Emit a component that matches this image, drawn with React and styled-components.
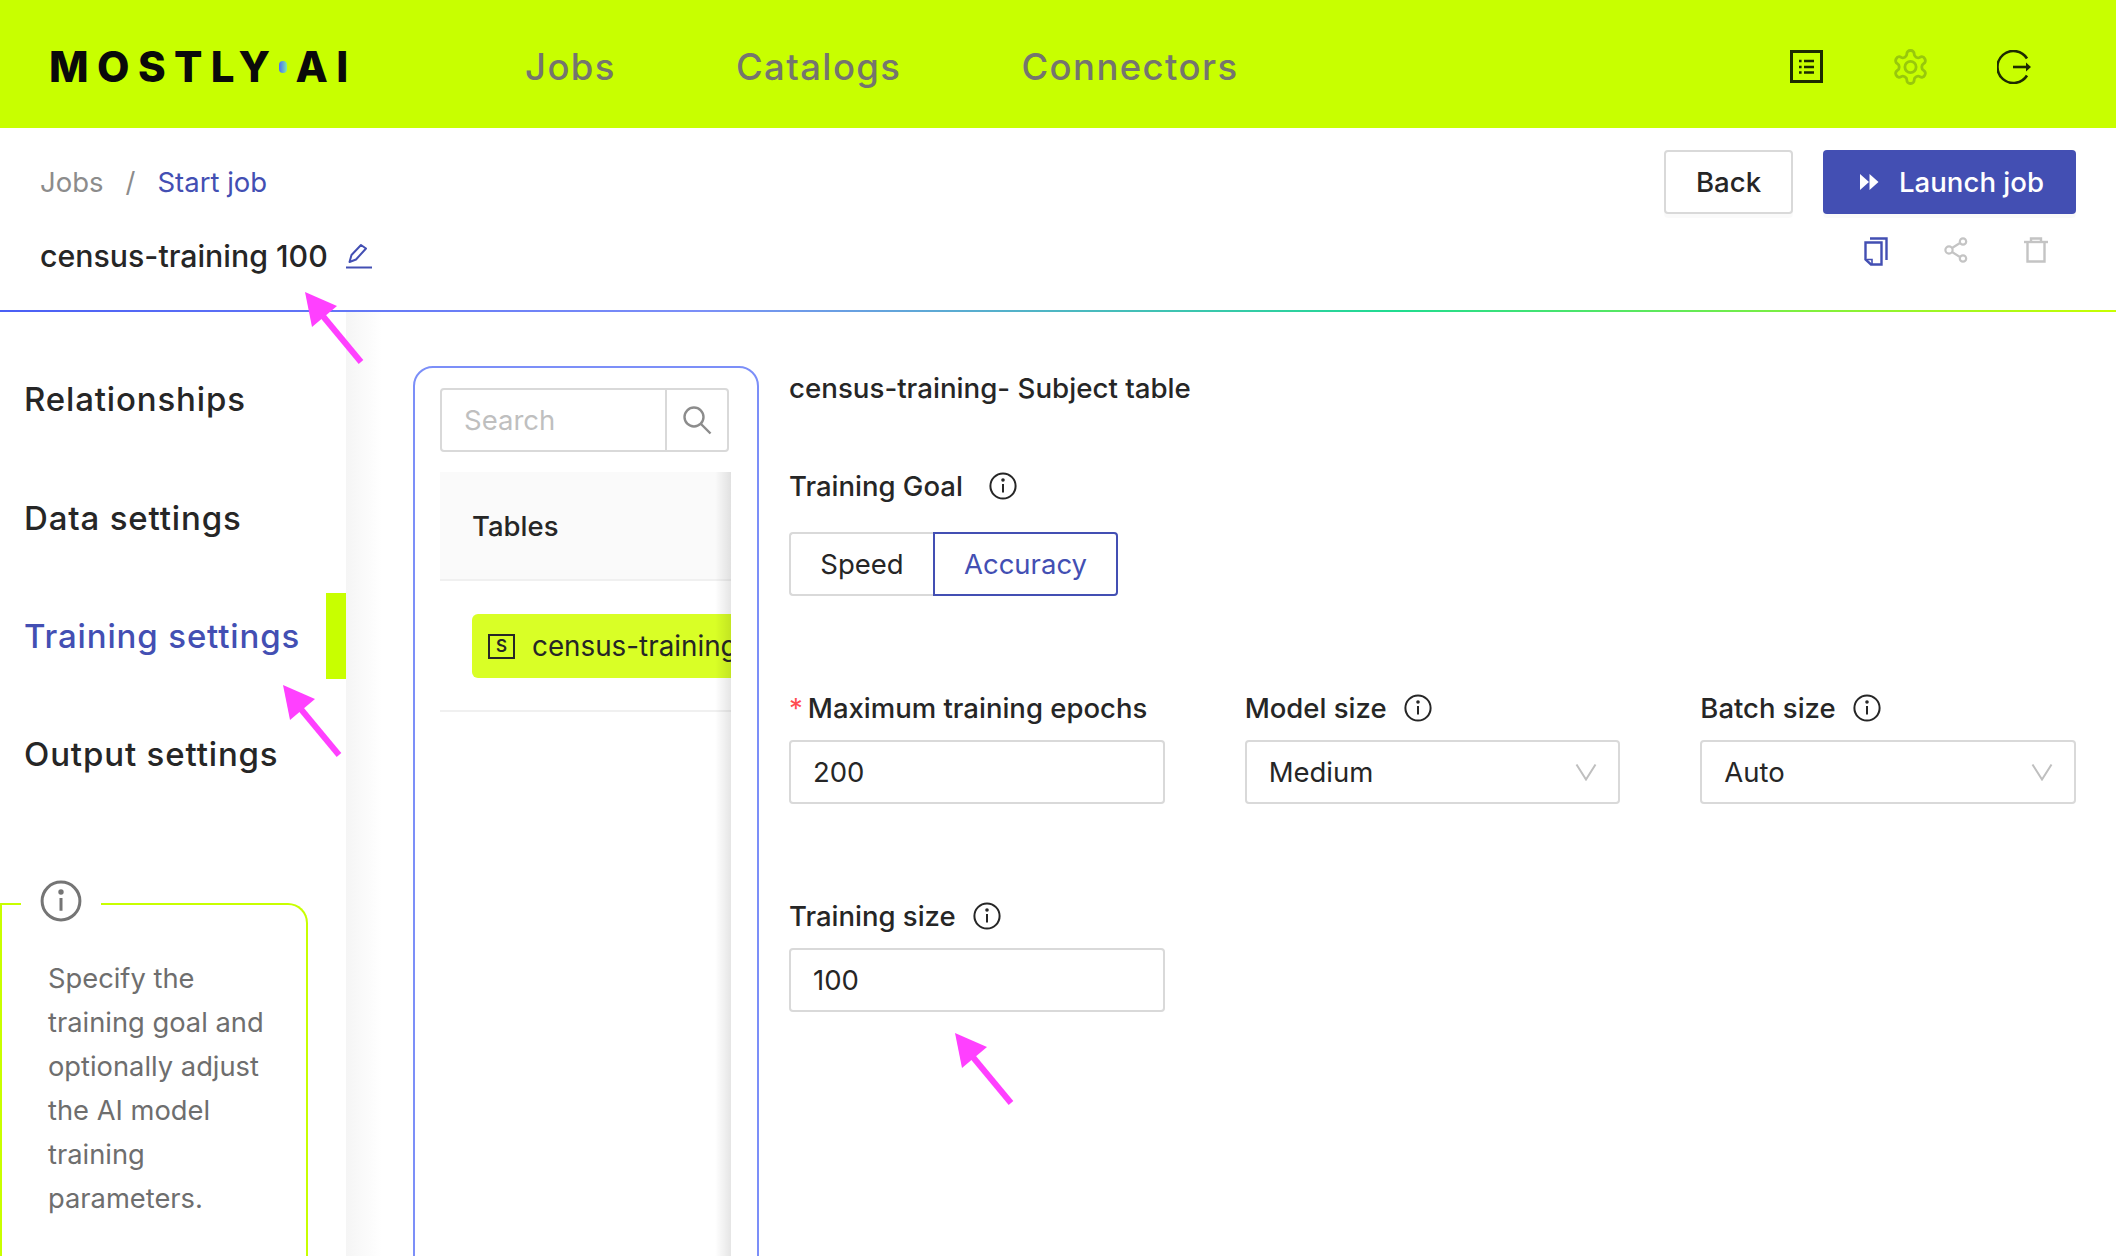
import React from "react";
import styled, { createGlobalStyle } from "styled-components";

const Global = createGlobalStyle`
  * { box-sizing: border-box; }
  html, body { margin: 0; padding: 0; background: #fff; }
  body { font-family: Inter, "Liberation Sans", sans-serif; color: #262626; }
`;

const Page = styled.div`
  position: relative;
  width: 2116px;
  height: 1256px;
  overflow: hidden;
  display: flex;
  flex-direction: column;
  background: #fff;
`;

const Header = styled.header`
  height: 128px;
  flex: none;
  background: #c8ff00;
  display: flex;
  align-items: center;
  padding: 5px 84px 0 49px;
`;

const Logo = styled.div`
  width: 476px;
  flex: none;
  display: flex;
  align-items: center;
  font-size: 42px;
  font-weight: 800;
  letter-spacing: 8.4px;
  color: #0a0a0a;
  line-height: 1;
`;

const LogoDot = styled.span`
  width: 8px;
  height: 12px;
  margin: 0 8px 0 1px;
  border-radius: 6px;
  background: linear-gradient(90deg, #4a6cf7, #7fe8a8);
`;

const Nav = styled.nav`
  display: flex;
  gap: 120px;
  flex: 1;
`;

const NavLink = styled.a`
  font-size: 36.5px;
  font-weight: 500;
  color: #75756e;
  letter-spacing: 1.4px;
`;

const HeaderIcons = styled.div`
  display: flex;
  align-items: center;
  gap: 69.500px;
`;

const SubHeader = styled.section`
  height: 182px;
  flex: none;
  padding: 22px 40px 0;
  display: flex;
  flex-direction: column;
`;

const TopRow = styled.div`
  display: flex;
  justify-content: space-between;
  align-items: center;
  height: 64px;
`;

const Crumbs = styled.div`
  display: flex;
  align-items: center;
  font-size: 27.5px;
`;

const Crumb = styled.span`
  color: ${(p) => (p.$active ? "#434fb3" : "#8c8c8c")};
`;

const CrumbSep = styled.span`
  color: #8c8c8c;
  margin: 0 22px;
`;

const Buttons = styled.div`
  display: flex;
  gap: 30px;
`;

const Button = styled.button`
  height: 64px;
  font-family: inherit;
  font-size: 27.6px;
  font-weight: 500;
  border-radius: 4px;
  display: flex;
  align-items: center;
  justify-content: center;
  gap: 20px;
  cursor: pointer;
  box-shadow: 0 4px 0 rgba(0, 0, 0, 0.02);
  width: ${(p) => (p.$primary ? "253px" : "129px")};
  padding: ${(p) => (p.$primary ? "0 0 0 5px" : "0")};
  background: ${(p) => (p.$primary ? "#434fb3" : "#fff")};
  color: ${(p) => (p.$primary ? "#fff" : "#262626")};
  border: ${(p) => (p.$primary ? "none" : "2px solid #d9d9d9")};
`;

const TitleRow = styled.div`
  display: flex;
  justify-content: space-between;
  align-items: flex-start;
  margin-top: 21px;
`;

const Title = styled.div`
  display: flex;
  align-items: center;
  gap: 18px;
  font-size: 30.300px;
  font-weight: 500;
  line-height: 44px;
  margin-top: -1px;
`;

const TitleActions = styled.div`
  display: flex;
  gap: 56px;
  margin-right: 28px;
  margin-top: 2px;
`;

const Rule = styled.div`
  height: 2px;
  flex: none;
  background: linear-gradient(90deg, #4a5ff5 0%, #7c8ff8 33%, #20dc90 66%, #c8ff00 100%);
`;

const Main = styled.main`
  flex: 1;
  display: flex;
  min-height: 0;
`;

const Sidebar = styled.aside`
  width: 346px;
  flex: none;
  padding-top: 28px;
`;

const SideItem = styled.div`
  height: 118.4px;
  padding-left: 24px;
  display: flex;
  align-items: center;
  justify-content: space-between;
  font-size: 33px;
  font-weight: 500;
  letter-spacing: 0.85px;
  color: ${(p) => (p.$active ? "#434fb3" : "#262626")};
`;

const ActiveBar = styled.span`
  width: 20px;
  height: 86px;
  background: #c8ff00;
`;

const InfoBox = styled.div`
  position: relative;
  width: 308px;
  height: 500px;
  margin-top: 89px;
  border: 2px solid #c8ff00;
  border-bottom: none;
  border-radius: 0 20px 0 0;
  padding: 52px 20px 0 46px;
  font-size: 27.3px;
  line-height: 44px;
  color: #6e6e6e;
`;

const InfoBadge = styled.span`
  position: absolute;
  top: -25px;
  left: 19px;
  width: 80px;
  height: 44px;
  background: #fff;
  display: flex;
  justify-content: center;
`;

const Fade = styled.div`
  width: 36px;
  flex: none;
  background: linear-gradient(90deg, #f5f5f5, #fff);
`;

const Panel = styled.section`
  width: 346px;
  height: 1000px;
  flex: none;
  margin: 54px 0 0 31px;
  border: 2px solid #7c8ff8;
  border-radius: 20px;
  padding: 20px 0 0 25px;
`;

const SearchBox = styled.div`
  width: 289px;
  height: 64px;
  display: flex;
  border: 2px solid #d9d9d9;
  border-radius: 4px;
`;

const SearchInput = styled.input`
  width: 223px;
  border: none;
  outline: none;
  padding: 0 0 0 22px;
  background: transparent;
  font: 27.5px Inter, sans-serif;
  color: #262626;
  &::placeholder { color: #bfbfbf; }
`;

const SearchButton = styled.span`
  flex: 1;
  border-left: 2px solid #d9d9d9;
  display: flex;
  align-items: center;
  justify-content: center;
`;

const TableList = styled.div`
  position: relative;
  width: 291px;
  height: 900px;
  margin-top: 20px;
  overflow: hidden;
  &::after {
    content: "";
    position: absolute;
    top: 0;
    right: 0;
    bottom: 0;
    width: 16px;
    background: linear-gradient(90deg, rgba(0, 0, 0, 0), rgba(0, 0, 0, 0.1));
  }
`;

const TableHead = styled.div`
  height: 109px;
  background: #fafafa;
  border-bottom: 2px solid #f0f0f0;
  padding-left: 32px;
  display: flex;
  align-items: center;
  font-size: 27.5px;
  font-weight: 500;
`;

const TableRow = styled.div`
  height: 131px;
  padding: 33px 0 0 32px;
  border-bottom: 2px solid #f0f0f0;
`;

const TablePill = styled.div`
  width: 300px;
  height: 64px;
  background: #d9ff26;
  border-radius: 6px;
  padding-left: 16px;
  display: flex;
  align-items: center;
  gap: 17px;
  font-size: 27.8px;
  white-space: nowrap;
`;

const SubjectBadge = styled.span`
  width: 27px;
  height: 25px;
  flex: none;
  border: 2px solid #262626;
  display: flex;
  align-items: center;
  justify-content: center;
  font-size: 17px;
  font-weight: 600;
`;

const Content = styled.section`
  flex: 1;
  padding: 59px 40px 0 30px;
`;

const Heading = styled.h2`
  margin: 0;
  font-size: 27.7px;
  line-height: 34px;
  font-weight: 500;
`;

const Label = styled.label`
  display: flex;
  align-items: center;
  height: 34px;
  font-size: 27.5px;
  font-weight: 500;
  gap: ${(p) => p.$gap || 17}px;
`;

const Required = styled.span`
  color: #ff4d4f;
  margin-right: -12px;
  font-weight: 400;
`;

const GoalSection = styled.div`
  margin-top: 64px;
`;

const Segments = styled.div`
  display: flex;
  margin-top: 29px;
`;

const Segment = styled.button`
  height: 64px;
  font-family: inherit;
  font-size: 27.5px;
  background: #fff;
  padding: 0;
  width: ${(p) => (p.$active ? "185px" : "144px")};
  color: ${(p) => (p.$active ? "#434fb3" : "#262626")};
  border: 2px solid ${(p) => (p.$active ? "#434fb3" : "#d9d9d9")};
  border-right-width: ${(p) => (p.$active ? "2px" : "0")};
  border-radius: ${(p) => (p.$active ? "0 4px 4px 0" : "4px 0 0 4px")};
`;

const FieldGrid = styled.div`
  display: grid;
  grid-template-columns: repeat(3, 1fr);
  column-gap: 80px;
  row-gap: 95px;
  margin-top: 95px;
`;

const Field = styled.div`
  display: flex;
  flex-direction: column;
  gap: 15px;
`;

const TextInput = styled.input`
  width: 100%;
  height: 64px;
  border: 2px solid #d9d9d9;
  border-radius: 4px;
  padding: 0 22px;
  font: 27.5px Inter, sans-serif;
  color: #262626;
  outline: none;
`;

const Select = styled.div`
  height: 64px;
  border: 2px solid #d9d9d9;
  border-radius: 4px;
  padding: 0 21px 0 22px;
  font-size: 27.5px;
  display: flex;
  align-items: center;
  justify-content: space-between;
`;

const Arrow = styled.svg`
  position: absolute;
  width: 62px;
  height: 75px;
  left: ${(p) => p.$x}px;
  top: ${(p) => p.$y}px;
`;

const InfoIcon = ({ size = 28, sw = 2, color = "#262626" }) => (
  <svg width={size} height={size} viewBox="0 0 28 28" fill="none" stroke={color} strokeWidth={sw}>
    <circle cx="14" cy="14" r="12.6" />
    <line x1="14" y1="12" x2="14" y2="20.5" />
    <circle cx="14" cy="8" r="0.8" fill={color} />
  </svg>
);

const Chevron = () => (
  <svg width="22" height="18" viewBox="0 0 22 18" fill="none" stroke="#bfbfbf" strokeWidth="2">
    <path d="M1.500 1.500L11 16.500L20.500 1.500" />
  </svg>
);

const MagentaArrow = ({ x, y }) => (
  <Arrow $x={x} $y={y} viewBox="0 0 62 75">
    <path d="M57 71L18 24" stroke="#ff40ff" strokeWidth="6" />
    <path d="M1 1L33 15L8 36Z" fill="#ff40ff" />
  </Arrow>
);

export default function App() {
  return (
    <Page>
      <Global />
      <Header>
        <Logo>
          MOSTLY<LogoDot />AI
        </Logo>
        <Nav>
          <NavLink>Jobs</NavLink>
          <NavLink>Catalogs</NavLink>
          <NavLink>Connectors</NavLink>
        </Nav>
        <HeaderIcons>
          <svg width="33" height="33" viewBox="0 0 33 33" fill="none" stroke="#1d2b00" strokeWidth="3">
            <rect x="1.5" y="1.5" width="30" height="30" />
            <path d="M14 11h10M14 17h10M14 22.5h10" strokeWidth="2.4" />
            <path d="M9 11h2.6M9 17h2.6M9 22.5h2.6" strokeWidth="2.4" />
          </svg>
          <svg width="35" height="36" viewBox="1.400 1.400 21.200 21.200" fill="none" stroke="#98c80c" strokeWidth="1.700" strokeLinejoin="round">
            <path d="M12.22 2h-.44a2 2 0 0 0-2 2v.18a2 2 0 0 1-1 1.73l-.43.25a2 2 0 0 1-2 0l-.15-.08a2 2 0 0 0-2.73.73l-.22.38a2 2 0 0 0 .73 2.73l.15.1a2 2 0 0 1 1 1.72v.51a2 2 0 0 1-1 1.74l-.15.09a2 2 0 0 0-.73 2.73l.22.38a2 2 0 0 0 2.73.73l.15-.08a2 2 0 0 1 2 0l.43.25a2 2 0 0 1 1 1.73V20a2 2 0 0 0 2 2h.44a2 2 0 0 0 2-2v-.18a2 2 0 0 1 1-1.73l.43-.25a2 2 0 0 1 2 0l.15.08a2 2 0 0 0 2.73-.73l.22-.39a2 2 0 0 0-.73-2.73l-.15-.08a2 2 0 0 1-1-1.74v-.5a2 2 0 0 1 1-1.74l.15-.09a2 2 0 0 0 .73-2.73l-.22-.38a2 2 0 0 0-2.73-.73l-.15.08a2 2 0 0 1-2 0l-.43-.25a2 2 0 0 1-1-1.73V4a2 2 0 0 0-2-2z" />
            <circle cx="12" cy="12" r="3.4" />
          </svg>
          <svg width="35" height="34" viewBox="0 0 35 34" fill="none" stroke="#1d2b00" strokeWidth="2.6">
            <path d="M30 8.5A16 16 0 1 0 30 25.5" />
            <path d="M16 17h15" />
            <path d="M29 12.5l5 4.5-5 4.5z" fill="#1d2b00" stroke="none" />
          </svg>
        </HeaderIcons>
      </Header>

      <SubHeader>
        <TopRow>
          <Crumbs>
            <Crumb>Jobs</Crumb>
            <CrumbSep>/</CrumbSep>
            <Crumb $active>Start job</Crumb>
          </Crumbs>
          <Buttons>
            <Button>Back</Button>
            <Button $primary>
              <svg width="19" height="16" viewBox="0 0 19 16" fill="#fff">
                <path d="M0 0l9 8-9 8zM9.500 0l9 8-9 8z" />
              </svg>
              Launch job
            </Button>
          </Buttons>
        </TopRow>
        <TitleRow>
          <Title>
            census-training 100
            <svg width="26" height="26" viewBox="0 0 26 26" fill="none" stroke="#434fb3" strokeWidth="2">
              <path d="M3.500 19l2-7L15 2l5 3.500-10 11z" strokeLinejoin="round" />
              <path d="M0 24.500h26" />
            </svg>
          </Title>
          <TitleActions>
            <svg width="24" height="29" viewBox="0 0 24 29" fill="none" stroke="#434fb3" strokeWidth="2.4">
              <path d="M6 1.500h16.500V23" />
              <path d="M1.500 5.500h16v22H7l-5.500-5z" />
              <path d="M3 22.500h5v5" strokeWidth="1.600" />
            </svg>
            <svg width="24" height="26" viewBox="0 0 24 26" fill="none" stroke="#c4c4c4" strokeWidth="2.2">
              <circle cx="5" cy="13" r="3.600" />
              <circle cx="19" cy="4.500" r="3.200" />
              <circle cx="19" cy="21.500" r="3.200" />
              <path d="M8 11l8-5M8 15l8 5" />
            </svg>
            <svg width="24" height="26" viewBox="0 0 24 26" fill="none" stroke="#c4c4c4" strokeWidth="2.4">
              <path d="M0 5h24" />
              <path d="M7 5V1.500h10V5" />
              <path d="M3.500 5v19.500h17V5" />
            </svg>
          </TitleActions>
        </TitleRow>
      </SubHeader>
      <Rule />

      <Main>
        <Sidebar>
          <SideItem>Relationships</SideItem>
          <SideItem>Data settings</SideItem>
          <SideItem $active>
            Training settings
            <ActiveBar />
          </SideItem>
          <SideItem>Output settings</SideItem>
          <InfoBox>
            <InfoBadge>
              <InfoIcon size={42} sw={2} color="#757575" />
            </InfoBadge>
            Specify the training goal and optionally adjust the AI model training parameters.
          </InfoBox>
        </Sidebar>
        <Fade />
        <Panel>
          <SearchBox>
            <SearchInput placeholder="Search" readOnly />
            <SearchButton>
              <svg width="30" height="30" viewBox="0 0 30 30" fill="none" stroke="#8c8c8c" strokeWidth="2.400">
                <circle cx="12" cy="12" r="9.500" />
                <path d="M19 19l9.500 9.500" />
              </svg>
            </SearchButton>
          </SearchBox>
          <TableList>
            <TableHead>Tables</TableHead>
            <TableRow>
              <TablePill>
                <SubjectBadge>S</SubjectBadge>
                census-training
              </TablePill>
            </TableRow>
          </TableList>
        </Panel>
        <Content>
          <Heading>census-training- Subject table</Heading>
          <GoalSection>
            <Label $gap={26}>
              Training Goal <InfoIcon />
            </Label>
            <Segments>
              <Segment>Speed</Segment>
              <Segment $active>Accuracy</Segment>
            </Segments>
          </GoalSection>
          <FieldGrid>
            <Field>
              <Label $gap={17}>
                <Required>*</Required> Maximum training epochs
              </Label>
              <TextInput defaultValue="200" readOnly />
            </Field>
            <Field>
              <Label>
                Model size <InfoIcon />
              </Label>
              <Select>
                Medium <Chevron />
              </Select>
            </Field>
            <Field>
              <Label>
                Batch size <InfoIcon />
              </Label>
              <Select>
                Auto <Chevron />
              </Select>
            </Field>
            <Field>
              <Label>
                Training size <InfoIcon />
              </Label>
              <TextInput defaultValue="100" readOnly />
            </Field>
          </FieldGrid>
        </Content>
      </Main>

      <MagentaArrow x={304} y={291} />
      <MagentaArrow x={282} y={684} />
      <MagentaArrow x={954} y={1032} />
    </Page>
  );
}
